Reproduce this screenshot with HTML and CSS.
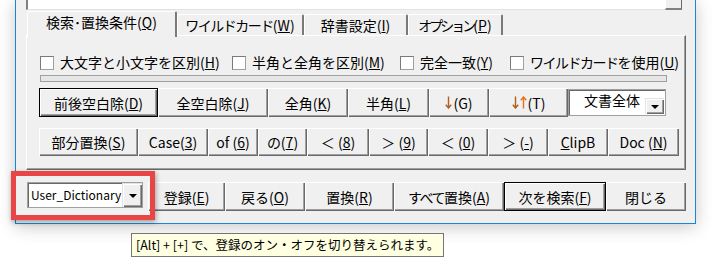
FILE: index.html
```html
<!DOCTYPE html>
<html lang="ja">
<head>
    <meta charset="UTF-8">
    <title>検索・置換</title>
    <link rel="stylesheet" href="styles.css">
</head>
<body>
    <div class="dialog">
        <div class="editor">
            <div class="editor-field"></div>
            <div class="editor-btn"></div>
        </div>

        <div class="tabs">
            <div class="tab active tab-search">検索･置換条件(<u>Q</u>)</div>
            <div class="tab tab-wild"><span class="kana">ワイルドカード</span>(<u>W</u>)</div>
            <div class="tab tab-dict">辞書設定(<u>I</u>)</div>
            <div class="tab tab-opt"><span class="kana-tight">オプション</span>(<u>P</u>)</div>
        </div>

        <div class="panel">
            <div class="checks">
                <label class="check check-case"><span class="check-box"></span><span>大文字と小文字を区別(<u>H</u>)</span></label>
                <label class="check check-width"><span class="check-box"></span><span>半角と全角を区別(<u>M</u>)</span></label>
                <label class="check check-exact"><span class="check-box"></span><span>完全一致(<u>Y</u>)</span></label>
                <label class="check"><span class="check-box"></span><span><span class="kana">ワイルドカード</span>を使用(<u>U</u>)</span></label>
            </div>
            <div class="slider"></div>

            <div class="row row-1">
                <div class="btn default w119">前後空白除(<u>D</u>)</div>
                <div class="btn w110">全空白除(<u>J</u>)</div>
                <div class="btn w80">全角(<u>K</u>)</div>
                <div class="btn w81">半角(<u>L</u>)</div>
                <div class="btn w60">
                    <svg class="arrow" width="7" height="13" viewBox="0 0 7 13"><path d="M3.5 0.5V12M0.8 8.8L3.5 12L6.2 8.8" fill="none" stroke="#b0601c" stroke-width="1.4"/></svg>(G)
                </div>
                <div class="btn w79">
                    <svg class="arrow" width="7" height="13" viewBox="0 0 7 13"><path d="M3.5 0.5V12M0.8 8.8L3.5 12L6.2 8.8" fill="none" stroke="#b0601c" stroke-width="1.4"/></svg><svg class="arrow" width="7" height="13" viewBox="0 0 7 13"><path d="M3.5 12.5V1M0.8 4.2L3.5 1L6.2 4.2" fill="none" stroke="#e8701a" stroke-width="1.4"/></svg>(T)
                </div>
                <div class="combo combo-scope">
                    <span class="combo-text">文書全体</span>
                    <span class="drop"></span>
                </div>
            </div>

            <div class="row row-2">
                <div class="btn w99">部分置換(<u>S</u>)</div>
                <div class="btn w70">Case(<u>3</u>)</div>
                <div class="btn w50">of (<u>6</u>)</div>
                <div class="btn w49">の(<u>7</u>)</div>
                <div class="btn w62">＜ (<u>8</u>)</div>
                <div class="btn w59">＞ (<u>9</u>)</div>
                <div class="btn w60">＜ (<u>0</u>)</div>
                <div class="btn w60">＞ (<u>-</u>)</div>
                <div class="btn w60"><u>C</u>lipB</div>
                <div class="btn w71">Doc (<u>N</u>)</div>
            </div>
        </div>

        <div class="footer">
            <div class="combo combo-dict">
                <span class="combo-text">User_Dictionary</span>
                <span class="drop"></span>
            </div>
            <div class="btn w77">登録(<u>E</u>)</div>
            <div class="btn w80">戻る(<u>O</u>)</div>
            <div class="btn w89">置換(<u>R</u>)</div>
            <div class="btn w110"><span class="kana">すべて</span>置換(<u>A</u>)</div>
            <div class="btn default w102">次を検索(<u>F</u>)</div>
            <div class="btn w80">閉じる</div>
        </div>
    </div>

    <div class="tooltip">[Alt] + [+] で、登録のオン・オフを切り替えられます。</div>

    <div class="highlight"></div>
</body>
</html>
```

FILE: styles.css
```css
body {
    margin: 0;
    width: 716px;
    height: 274px;
    overflow: hidden;
    position: relative;
    background: #fff;
    color: #000;
    font-family: "Noto Sans CJK JP", sans-serif;
    font-size: 14px;
}

u {
    text-underline-offset: 1px;
}

/* kana are narrower in the original UI font */
.kana {
    letter-spacing: -1.5px;
}

.kana-tight {
    letter-spacing: -3px;
}

.dialog {
    width: 681px;
    height: 224px;
    margin-left: 15px;
    box-sizing: border-box;
    padding: 0 9px 0 10px;
    background: #f0f0f0;
    border: 1px solid #1c84d8;
    border-top: none;
    box-shadow: 0 3px 16px rgba(0, 0, 0, 0.22);
}

/* top text field, cut off by the screenshot */
.editor {
    display: flex;
    width: 656px;
    height: 10px;
}

.editor-field {
    flex: 1;
    background: #fff;
    border-left: 2px solid #808080;
    border-bottom: 1px solid #e3e3e3;
}

.editor-btn {
    width: 17px;
    box-sizing: border-box;
    background: #f0f0f0;
    border-left: 1px solid #fff;
    border-right: 1px solid #696969;
    border-bottom: 2px solid #808080;
}

/* tabs */
.tabs {
    display: flex;
    align-items: flex-end;
    height: 25px;
    padding-left: 1px;
}

.tab {
    box-sizing: border-box;
    height: 21px;
    padding-top: 2px;
    text-align: center;
    line-height: 17px;
    white-space: nowrap;
    border-top: 1px solid #fff;
    border-left: 1px solid #fff;
    border-right: 2px solid #7a7a7a;
    border-radius: 2px 2px 0 0;
}

.tab.active {
    position: relative;
    z-index: 1;
    height: 26px;
    margin-bottom: -2px;
    padding-top: 2px;
    background: #f0f0f0;
}

.tab-search { width: 150px; }
.tab-wild { width: 127px; }
.tab-dict { width: 104px; }
.tab-opt { width: 95px; }

.panel {
    box-sizing: border-box;
    width: 660px;
    height: 135px;
    padding: 19px 0 0 12px;
    border: 1px solid;
    border-color: #fff #696969 #696969 #fff;
    box-shadow: inset -1px -1px 0 #a0a0a0;
}

/* check boxes */
.checks {
    display: flex;
    align-items: center;
    height: 15px;
    margin-left: 1px;
    line-height: 15px;
}

.check {
    display: flex;
    align-items: center;
    gap: 6px;
    white-space: nowrap;
}

.check-case { width: 192px; }
.check-width { width: 168px; }
.check-exact { width: 110px; }

.check-box {
    width: 14px;
    height: 14px;
    box-sizing: border-box;
    background: #fff;
    border: 1px solid #a0a0a0;
    border-top-color: #7a7a7a;
    border-left-color: #7a7a7a;
}

.slider {
    width: 627px;
    height: 7px;
    margin: 5px 0 0 1px;
    box-sizing: border-box;
    background: #e6e6e6;
    border: 1px solid #a0a0a0;
}

/* buttons */
.row {
    display: flex;
}

.row-1 {
    height: 29px;
    margin-top: 6px;
}

.row-2 {
    height: 28px;
    margin-top: 11px;
}

.btn {
    box-sizing: border-box;
    height: 100%;
    display: flex;
    align-items: center;
    justify-content: center;
    white-space: nowrap;
    background: #f0f0f0;
    box-shadow: inset 1px 1px 0 #fff, inset -1px -1px 0 #696969, inset -2px -2px 0 #a0a0a0;
}

.btn.default {
    border: 1px solid #000;
}

.w49 { width: 49px; }
.w50 { width: 50px; }
.w59 { width: 59px; }
.w60 { width: 60px; }
.w62 { width: 62px; }
.w70 { width: 70px; }
.w71 { width: 71px; }
.w77 { width: 77px; }
.w79 { width: 79px; }
.w80 { width: 80px; }
.w81 { width: 81px; }
.w89 { width: 89px; }
.w99 { width: 99px; }
.w102 { width: 102px; }
.w110 { width: 110px; }
.w119 { width: 119px; }

.arrow {
    margin-right: 1px;
}

/* combo boxes */
.combo {
    box-sizing: border-box;
    display: flex;
    background: #fff;
    border: 1px solid #a0a0a0;
    box-shadow: inset 1px 1px 0 #696969;
}

.combo-text {
    flex: 1;
    white-space: nowrap;
    overflow: hidden;
}

.drop {
    width: 19px;
    box-sizing: border-box;
    display: flex;
    align-items: center;
    justify-content: center;
    background: #f0f0f0;
    border-top: 1px solid #e3e3e3;
    border-left: 1px solid #e3e3e3;
    box-shadow: inset 1px 1px 0 #fff, inset -1px -1px 0 #696969, inset -2px -2px 0 #a0a0a0;
}

.drop::after {
    content: "";
    border-left: 4px solid transparent;
    border-right: 4px solid transparent;
    border-top: 4px solid #000;
}

.combo-scope {
    width: 98px;
    height: 27px;
    margin-top: 1px;
}

.combo-scope .combo-text {
    padding: 1px 0 0 15px;
    line-height: 18px;
}

.combo-scope .drop {
    height: 16px;
    align-self: flex-end;
    margin: 0 1px 1px 0;
}

.footer {
    display: flex;
    align-items: flex-start;
    height: 29px;
    margin-top: 12px;
}

.combo-dict {
    width: 116px;
    height: 26px;
    margin: 0 5px 0 1px;
}

.combo-dict .combo-text {
    padding-left: 3px;
    font-size: 12px;
    line-height: 24px;
}

.combo-dict .drop {
    width: 20px;
}

.tooltip {
    display: inline-block;
    height: 24px;
    margin: 9px 0 0 131px;
    padding: 0 4px;
    box-sizing: border-box;
    background: #ffffe1;
    border: 1px solid #767676;
    font-size: 12.5px;
    line-height: 22px;
}

/* red annotation box over the dictionary combo */
.highlight {
    position: absolute;
    left: 11px;
    top: 171px;
    width: 144px;
    height: 49px;
    box-sizing: border-box;
    border: 5px solid #e84646;
    box-shadow: 1px 2px 5px rgba(0, 0, 0, 0.35);
}
```
